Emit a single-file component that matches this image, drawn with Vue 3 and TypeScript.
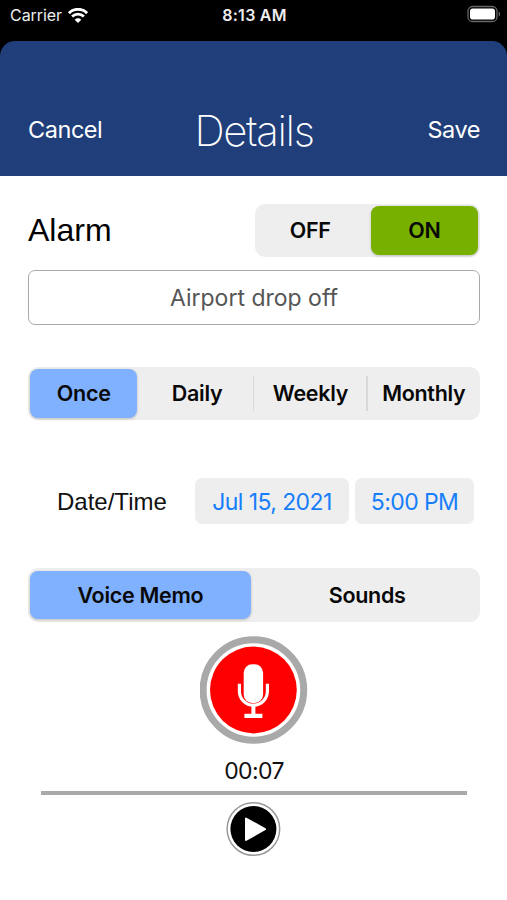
<script setup lang="ts">
import { ref } from 'vue'

const alarmStates = ['OFF', 'ON']
const repeats = ['Once', 'Daily', 'Weekly', 'Monthly']
const sources = ['Voice Memo', 'Sounds']

const alarm = ref('ON')
const repeat = ref('Once')
const source = ref('Voice Memo')
</script>

<template>
  <div class="screen">
    <div class="status">
      <div class="carrier">
        <span>Carrier</span>
        <svg width="20" height="15" viewBox="0 0 20 15" fill="none" stroke="#fff">
          <path d="M.9 5.100a12.900 12.900 0 0 1 18.200 0" stroke-width="3" />
          <path d="M4.100 8.600a8.400 8.400 0 0 1 11.800 0" stroke-width="2.800" />
          <path d="M10 15 6.700 11.700a4.700 4.700 0 0 1 6.600 0Z" fill="#fff" stroke="none" />
        </svg>
      </div>
      <span class="clock">8:13 AM</span>
      <svg class="battery" width="34" height="18" viewBox="0 0 34 18">
        <rect x="1" y="1.500" width="29" height="15" rx="4.600" fill="none" stroke="#666" stroke-width="1.300" />
        <rect x="3" y="3.500" width="25" height="11" rx="2.800" fill="#fff" />
        <path d="M31.700 6.500v5q1.500-.7 1.500-2.500t-1.500-2.500Z" fill="#666" />
      </svg>
    </div>

    <header class="header">
      <span class="action cancel">Cancel</span>
      <h1 class="title">Details</h1>
      <span class="action save">Save</span>
    </header>

    <main class="body">
      <div class="alarm-row">
        <span class="alarm-label">Alarm</span>
        <div class="segments alarm">
          <div
            v-for="s in alarmStates"
            :key="s"
            class="segment"
            :class="{ selected: s === alarm }"
            @click="alarm = s"
          ><span>{{ s }}</span></div>
        </div>
      </div>

      <div class="name-field"><span>Airport drop off</span></div>

      <div class="segments repeat">
        <div
          v-for="r in repeats"
          :key="r"
          class="segment"
          :class="{ selected: r === repeat }"
          @click="repeat = r"
        ><span>{{ r }}</span></div>
      </div>

      <div class="date-row">
        <span class="date-label">Date/Time</span>
        <span class="chip date">Jul 15, 2021</span>
        <span class="chip time">5:00 PM</span>
      </div>

      <div class="segments source">
        <div
          v-for="s in sources"
          :key="s"
          class="segment"
          :class="{ selected: s === source }"
          @click="source = s"
        ><span>{{ s }}</span></div>
      </div>

      <svg class="record" width="108" height="108" viewBox="0 0 108 108">
        <circle cx="53.400" cy="54" r="50.300" fill="#fff" stroke="#a9a9a9" stroke-width="7" />
        <circle cx="53.400" cy="54" r="43.400" fill="#f00" />
        <rect x="43.700" y="28.200" width="19.400" height="38.800" rx="8.500" fill="#fff" />
        <path d="M39.400 47.700v7.500a14 14 0 0 0 28 0v-7.500" fill="none" stroke="#fff" stroke-width="3.200" />
        <path d="M51.400 69h4v8.700h7v4.300h-18v-4.300h7Z" fill="#fff" />
      </svg>

      <div class="elapsed">00:07</div>
      <div class="track"></div>

      <svg class="play" width="56" height="56" viewBox="0 0 56 56">
        <circle cx="27.400" cy="28" r="26.300" fill="#fff" stroke="#999" stroke-width="1.500" />
        <circle cx="27.400" cy="28" r="23" fill="#000" />
        <path d="M20 17.500v21.500L39 28.200Z" fill="#fff" stroke="#fff" stroke-width="2" stroke-linejoin="round" />
      </svg>
    </main>
  </div>
</template>

<style>
body {
  background: #fff;
}
</style>

<style scoped>
.screen {
  width: 507px;
  height: 900px;
  overflow: hidden;
  background: #fff;
  color: #111;
  font-family: Inter, 'Liberation Sans', sans-serif;
  box-sizing: border-box;
}
.status {
  height: 56px;
  background: #000;
  color: #eee;
  display: grid;
  grid-template-columns: 1fr auto 1fr;
  align-items: start;
  padding: 5px 8px 0 10px;
  box-sizing: border-box;
  font-size: 16px;
  line-height: 20px;
}
.carrier {
  display: flex;
  gap: 6px;
  align-items: center;
  letter-spacing: -0.05px;
}
.clock {
  font-weight: 600;
  letter-spacing: 0.25px;
}
.battery {
  justify-self: end;
  margin-right: -2px;
}
.header {
  height: 135px;
  margin-top: -15px;
  border-radius: 15px 15px 0 0;
  background: #203e79;
  color: #fff;
  display: grid;
  grid-template-columns: 1fr auto 1fr;
  align-items: end;
  padding: 0 27px 20px 28px;
  box-sizing: border-box;
}
.action {
  font-size: 23.5px;
  line-height: 28px;
  padding-bottom: 12px;
  letter-spacing: -0.45px;
}
.save {
  text-align: right;
}
.title {
  margin: 0;
  font-size: 42px;
  line-height: 50px;
  font-weight: 200;
  letter-spacing: -1.35px;
}
.body {
  display: flex;
  flex-direction: column;
  align-items: center;
  padding: 27.5px 27px 0 28px;
}
.alarm-row {
  align-self: stretch;
  display: flex;
  justify-content: space-between;
  align-items: center;
}
.alarm-label {
  font: 32px/36px 'Liberation Sans', sans-serif;
  color: #000;
}
.segments {
  display: flex;
  height: 53.5px;
  padding: 2.5px;
  box-sizing: border-box;
  border-radius: 10px;
  background: #eee;
  font-size: 21.5px;
  font-weight: 600;
  letter-spacing: -0.3px;
  color: #080808;
}
.segment {
  flex: 1 1 0;
  min-width: 0;
  display: flex;
  align-items: center;
  justify-content: center;
  border-radius: 8px;
  white-space: nowrap;
  position: relative;
}
.selected {
  background: #80b1ff;
  box-shadow: 0 1px 3px rgba(0, 0, 0, 0.2);
}
.alarm {
  width: 225.5px;
  gap: 8px;
}
.alarm .selected {
  background: #78b000;
}
.repeat {
  width: 452px;
  margin-top: 41.5px;
  padding-left: 2px;
  gap: 6px;
}
.repeat .segment:nth-child(n + 3)::before {
  content: '';
  position: absolute;
  left: -4px;
  top: 7px;
  bottom: 7px;
  width: 1.5px;
  background: #d8d8d8;
}
.name-field {
  align-self: stretch;
  height: 55px;
  box-sizing: border-box;
  margin-top: 13px;
  padding-top: 1px;
  border: 1.5px solid #aaa;
  border-radius: 7px;
  display: flex;
  align-items: center;
  justify-content: center;
  font-size: 23px;
  color: #555;
}
.date-row {
  align-self: stretch;
  display: flex;
  align-items: center;
  margin-top: 58px;
  padding-left: 29px;
}
.date-label {
  width: 138px;
  padding-top: 1px;
  box-sizing: border-box;
  font: 24px/28px 'Liberation Sans', sans-serif;
}
.chip {
  height: 46px;
  padding-top: 1px;
  box-sizing: border-box;
  border-radius: 7px;
  background: #eee;
  color: #177efb;
  display: flex;
  align-items: center;
  justify-content: center;
  font-size: 23px;
  letter-spacing: -0.6px;
}
.date {
  width: 154px;
}
.time {
  width: 119px;
  margin-left: 6px;
}
.source {
  width: 452px;
  margin-top: 44px;
  padding-left: 2px;
  gap: 6px;
}
.record {
  margin-top: 14px;
}
.elapsed {
  margin-top: 13.5px;
  font-size: 23px;
  line-height: 28px;
  letter-spacing: -0.6px;
}
.track {
  width: 426px;
  height: 3.5px;
  margin-top: 6px;
  background: #a9a9a9;
}
.play {
  margin-top: 6px;
}
</style>
